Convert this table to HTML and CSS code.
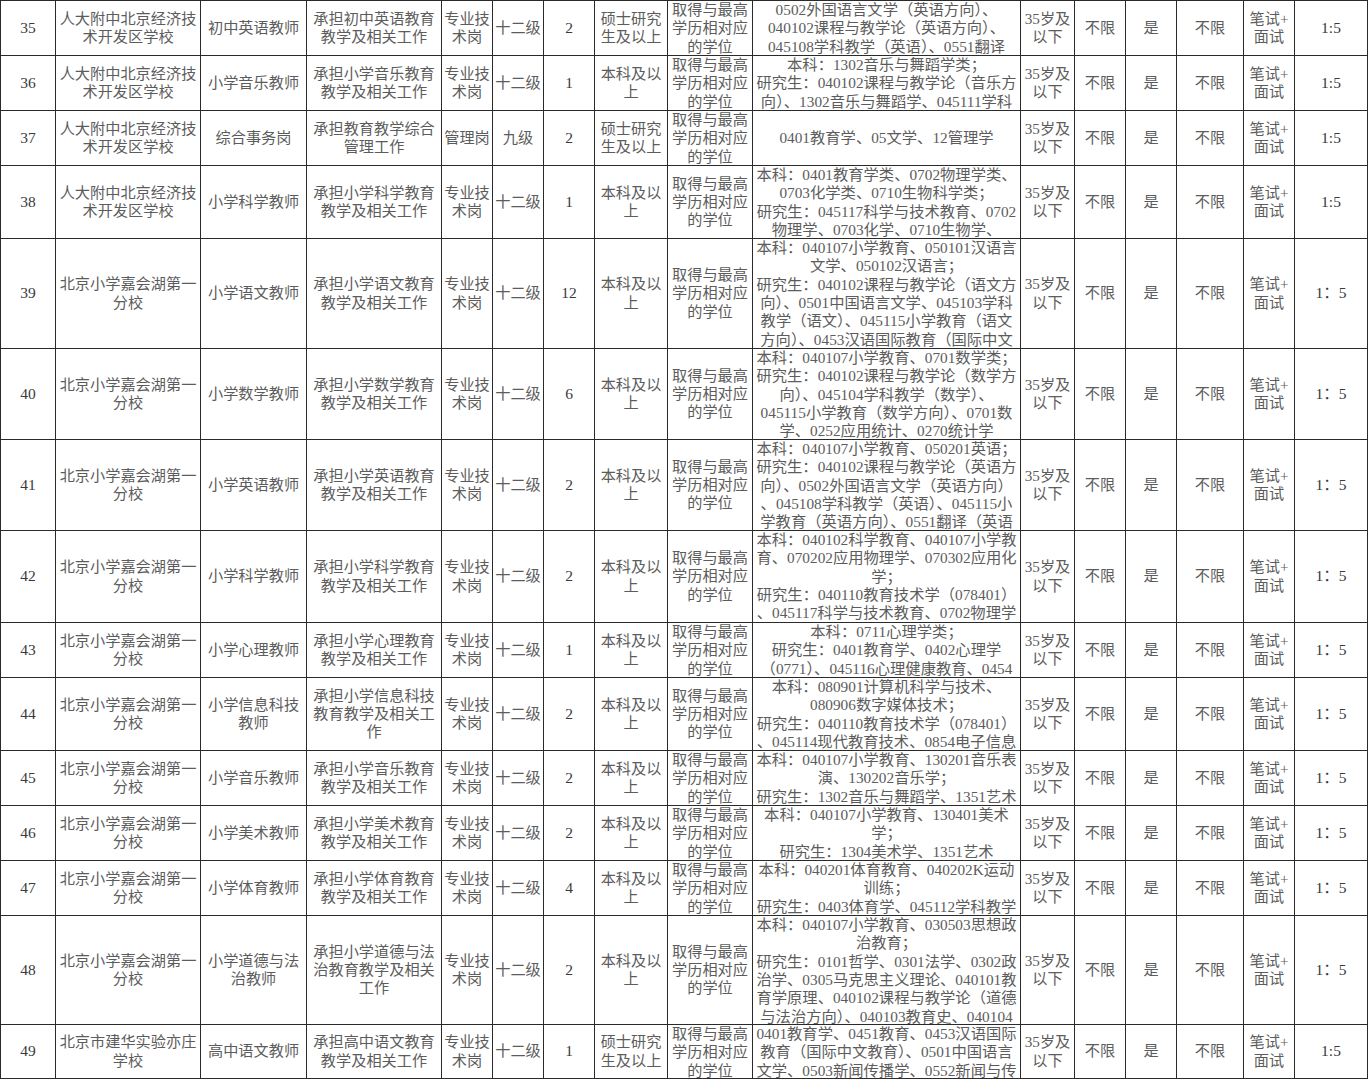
FILE: index.html
```html
<!DOCTYPE html>
<html lang="zh-CN">
<head>
<meta charset="utf-8">
<title>招聘岗位表</title>
<link rel="stylesheet" href="styles.css">
</head>
<body>
<div class="sheet">

  <div class="row h55">
    <div class="c num">35</div>
    <div class="c">人大附中北京经济技<br>术开发区学校</div>
    <div class="c">初中英语教师</div>
    <div class="c">承担初中英语教育<br>教学及相关工作</div>
    <div class="c">专业技<br>术岗</div>
    <div class="c">十二级</div>
    <div class="c num">2</div>
    <div class="c">硕士研究<br>生及以上</div>
    <div class="c">取得与最高<br>学历相对应<br>的学位</div>
    <div class="c major">0502外国语言文学（英语方向）、<br>040102课程与教学论（英语方向）、<br>045108学科教学（英语）、0551翻译</div>
    <div class="c">35岁及<br>以下</div>
    <div class="c">不限</div>
    <div class="c">是</div>
    <div class="c">不限</div>
    <div class="c">笔试+<br>面试</div>
    <div class="c num last">1:5</div>
  </div>

  <div class="row h55">
    <div class="c num">36</div>
    <div class="c">人大附中北京经济技<br>术开发区学校</div>
    <div class="c">小学音乐教师</div>
    <div class="c">承担小学音乐教育<br>教学及相关工作</div>
    <div class="c">专业技<br>术岗</div>
    <div class="c">十二级</div>
    <div class="c num">1</div>
    <div class="c">本科及以<br>上</div>
    <div class="c">取得与最高<br>学历相对应<br>的学位</div>
    <div class="c major">本科：1302音乐与舞蹈学类；<br>研究生：040102课程与教学论（音乐方<br>向）、1302音乐与舞蹈学、045111学科</div>
    <div class="c">35岁及<br>以下</div>
    <div class="c">不限</div>
    <div class="c">是</div>
    <div class="c">不限</div>
    <div class="c">笔试+<br>面试</div>
    <div class="c num last">1:5</div>
  </div>

  <div class="row h55">
    <div class="c num">37</div>
    <div class="c">人大附中北京经济技<br>术开发区学校</div>
    <div class="c">综合事务岗</div>
    <div class="c">承担教育教学综合<br>管理工作</div>
    <div class="c">管理岗</div>
    <div class="c">九级</div>
    <div class="c num">2</div>
    <div class="c">硕士研究<br>生及以上</div>
    <div class="c">取得与最高<br>学历相对应<br>的学位</div>
    <div class="c major">0401教育学、05文学、12管理学</div>
    <div class="c">35岁及<br>以下</div>
    <div class="c">不限</div>
    <div class="c">是</div>
    <div class="c">不限</div>
    <div class="c">笔试+<br>面试</div>
    <div class="c num last">1:5</div>
  </div>

  <div class="row h73">
    <div class="c num">38</div>
    <div class="c">人大附中北京经济技<br>术开发区学校</div>
    <div class="c">小学科学教师</div>
    <div class="c">承担小学科学教育<br>教学及相关工作</div>
    <div class="c">专业技<br>术岗</div>
    <div class="c">十二级</div>
    <div class="c num">1</div>
    <div class="c">本科及以<br>上</div>
    <div class="c">取得与最高<br>学历相对应<br>的学位</div>
    <div class="c major">本科：0401教育学类、0702物理学类、<br>0703化学类、0710生物科学类；<br>研究生：045117科学与技术教育、0702<br>物理学、0703化学、0710生物学、</div>
    <div class="c">35岁及<br>以下</div>
    <div class="c">不限</div>
    <div class="c">是</div>
    <div class="c">不限</div>
    <div class="c">笔试+<br>面试</div>
    <div class="c num last">1:5</div>
  </div>

  <div class="row h110">
    <div class="c num">39</div>
    <div class="c">北京小学嘉会湖第一<br>分校</div>
    <div class="c">小学语文教师</div>
    <div class="c">承担小学语文教育<br>教学及相关工作</div>
    <div class="c">专业技<br>术岗</div>
    <div class="c">十二级</div>
    <div class="c num">12</div>
    <div class="c">本科及以<br>上</div>
    <div class="c">取得与最高<br>学历相对应<br>的学位</div>
    <div class="c major">本科：040107小学教育、050101汉语言<br>文学、050102汉语言；<br>研究生：040102课程与教学论（语文方<br>向）、0501中国语言文学、045103学科<br>教学（语文）、045115小学教育（语文<br>方向）、0453汉语国际教育（国际中文</div>
    <div class="c">35岁及<br>以下</div>
    <div class="c">不限</div>
    <div class="c">是</div>
    <div class="c">不限</div>
    <div class="c">笔试+<br>面试</div>
    <div class="c num last">1：5</div>
  </div>

  <div class="row h91">
    <div class="c num">40</div>
    <div class="c">北京小学嘉会湖第一<br>分校</div>
    <div class="c">小学数学教师</div>
    <div class="c">承担小学数学教育<br>教学及相关工作</div>
    <div class="c">专业技<br>术岗</div>
    <div class="c">十二级</div>
    <div class="c num">6</div>
    <div class="c">本科及以<br>上</div>
    <div class="c">取得与最高<br>学历相对应<br>的学位</div>
    <div class="c major">本科：040107小学教育、0701数学类；<br>研究生：040102课程与教学论（数学方<br>向）、045104学科教学（数学）、<br>045115小学教育（数学方向）、0701数<br>学、0252应用统计、0270统计学</div>
    <div class="c">35岁及<br>以下</div>
    <div class="c">不限</div>
    <div class="c">是</div>
    <div class="c">不限</div>
    <div class="c">笔试+<br>面试</div>
    <div class="c num last">1：5</div>
  </div>

  <div class="row h91">
    <div class="c num">41</div>
    <div class="c">北京小学嘉会湖第一<br>分校</div>
    <div class="c">小学英语教师</div>
    <div class="c">承担小学英语教育<br>教学及相关工作</div>
    <div class="c">专业技<br>术岗</div>
    <div class="c">十二级</div>
    <div class="c num">2</div>
    <div class="c">本科及以<br>上</div>
    <div class="c">取得与最高<br>学历相对应<br>的学位</div>
    <div class="c major">本科：040107小学教育、050201英语；<br>研究生：040102课程与教学论（英语方<br>向）、0502外国语言文学（英语方向）<br>、045108学科教学（英语）、045115小<br>学教育（英语方向）、0551翻译（英语</div>
    <div class="c">35岁及<br>以下</div>
    <div class="c">不限</div>
    <div class="c">是</div>
    <div class="c">不限</div>
    <div class="c">笔试+<br>面试</div>
    <div class="c num last">1：5</div>
  </div>

  <div class="row h92">
    <div class="c num">42</div>
    <div class="c">北京小学嘉会湖第一<br>分校</div>
    <div class="c">小学科学教师</div>
    <div class="c">承担小学科学教育<br>教学及相关工作</div>
    <div class="c">专业技<br>术岗</div>
    <div class="c">十二级</div>
    <div class="c num">2</div>
    <div class="c">本科及以<br>上</div>
    <div class="c">取得与最高<br>学历相对应<br>的学位</div>
    <div class="c major">本科：040102科学教育、040107小学教<br>育、070202应用物理学、070302应用化<br>学；<br>研究生：040110教育技术学（078401）<br>、045117科学与技术教育、0702物理学</div>
    <div class="c">35岁及<br>以下</div>
    <div class="c">不限</div>
    <div class="c">是</div>
    <div class="c">不限</div>
    <div class="c">笔试+<br>面试</div>
    <div class="c num last">1：5</div>
  </div>

  <div class="row h55">
    <div class="c num">43</div>
    <div class="c">北京小学嘉会湖第一<br>分校</div>
    <div class="c">小学心理教师</div>
    <div class="c">承担小学心理教育<br>教学及相关工作</div>
    <div class="c">专业技<br>术岗</div>
    <div class="c">十二级</div>
    <div class="c num">1</div>
    <div class="c">本科及以<br>上</div>
    <div class="c">取得与最高<br>学历相对应<br>的学位</div>
    <div class="c major">本科：0711心理学类；<br>研究生：0401教育学、0402心理学<br>（0771）、045116心理健康教育、0454</div>
    <div class="c">35岁及<br>以下</div>
    <div class="c">不限</div>
    <div class="c">是</div>
    <div class="c">不限</div>
    <div class="c">笔试+<br>面试</div>
    <div class="c num last">1：5</div>
  </div>

  <div class="row h73">
    <div class="c num">44</div>
    <div class="c">北京小学嘉会湖第一<br>分校</div>
    <div class="c">小学信息科技<br>教师</div>
    <div class="c">承担小学信息科技<br>教育教学及相关工<br>作</div>
    <div class="c">专业技<br>术岗</div>
    <div class="c">十二级</div>
    <div class="c num">2</div>
    <div class="c">本科及以<br>上</div>
    <div class="c">取得与最高<br>学历相对应<br>的学位</div>
    <div class="c major">本科：080901计算机科学与技术、<br>080906数字媒体技术；<br>研究生：040110教育技术学（078401）<br>、045114现代教育技术、0854电子信息</div>
    <div class="c">35岁及<br>以下</div>
    <div class="c">不限</div>
    <div class="c">是</div>
    <div class="c">不限</div>
    <div class="c">笔试+<br>面试</div>
    <div class="c num last">1：5</div>
  </div>

  <div class="row h55">
    <div class="c num">45</div>
    <div class="c">北京小学嘉会湖第一<br>分校</div>
    <div class="c">小学音乐教师</div>
    <div class="c">承担小学音乐教育<br>教学及相关工作</div>
    <div class="c">专业技<br>术岗</div>
    <div class="c">十二级</div>
    <div class="c num">2</div>
    <div class="c">本科及以<br>上</div>
    <div class="c">取得与最高<br>学历相对应<br>的学位</div>
    <div class="c major">本科：040107小学教育、130201音乐表<br>演、130202音乐学；<br>研究生：1302音乐与舞蹈学、1351艺术</div>
    <div class="c">35岁及<br>以下</div>
    <div class="c">不限</div>
    <div class="c">是</div>
    <div class="c">不限</div>
    <div class="c">笔试+<br>面试</div>
    <div class="c num last">1：5</div>
  </div>

  <div class="row h55">
    <div class="c num">46</div>
    <div class="c">北京小学嘉会湖第一<br>分校</div>
    <div class="c">小学美术教师</div>
    <div class="c">承担小学美术教育<br>教学及相关工作</div>
    <div class="c">专业技<br>术岗</div>
    <div class="c">十二级</div>
    <div class="c num">2</div>
    <div class="c">本科及以<br>上</div>
    <div class="c">取得与最高<br>学历相对应<br>的学位</div>
    <div class="c major">本科：040107小学教育、130401美术<br>学；<br>研究生：1304美术学、1351艺术</div>
    <div class="c">35岁及<br>以下</div>
    <div class="c">不限</div>
    <div class="c">是</div>
    <div class="c">不限</div>
    <div class="c">笔试+<br>面试</div>
    <div class="c num last">1：5</div>
  </div>

  <div class="row h55">
    <div class="c num">47</div>
    <div class="c">北京小学嘉会湖第一<br>分校</div>
    <div class="c">小学体育教师</div>
    <div class="c">承担小学体育教育<br>教学及相关工作</div>
    <div class="c">专业技<br>术岗</div>
    <div class="c">十二级</div>
    <div class="c num">4</div>
    <div class="c">本科及以<br>上</div>
    <div class="c">取得与最高<br>学历相对应<br>的学位</div>
    <div class="c major">本科：040201体育教育、040202K运动<br>训练；<br>研究生：0403体育学、045112学科教学</div>
    <div class="c">35岁及<br>以下</div>
    <div class="c">不限</div>
    <div class="c">是</div>
    <div class="c">不限</div>
    <div class="c">笔试+<br>面试</div>
    <div class="c num last">1：5</div>
  </div>

  <div class="row h109">
    <div class="c num">48</div>
    <div class="c">北京小学嘉会湖第一<br>分校</div>
    <div class="c">小学道德与法<br>治教师</div>
    <div class="c">承担小学道德与法<br>治教育教学及相关<br>工作</div>
    <div class="c">专业技<br>术岗</div>
    <div class="c">十二级</div>
    <div class="c num">2</div>
    <div class="c">本科及以<br>上</div>
    <div class="c">取得与最高<br>学历相对应<br>的学位</div>
    <div class="c major">本科：040107小学教育、030503思想政<br>治教育；<br>研究生：0101哲学、0301法学、0302政<br>治学、0305马克思主义理论、040101教<br>育学原理、040102课程与教学论（道德<br>与法治方向）、040103教育史、040104</div>
    <div class="c">35岁及<br>以下</div>
    <div class="c">不限</div>
    <div class="c">是</div>
    <div class="c">不限</div>
    <div class="c">笔试+<br>面试</div>
    <div class="c num last">1：5</div>
  </div>

  <div class="row h55 end">
    <div class="c num">49</div>
    <div class="c">北京市建华实验亦庄<br>学校</div>
    <div class="c">高中语文教师</div>
    <div class="c">承担高中语文教育<br>教学及相关工作</div>
    <div class="c">专业技<br>术岗</div>
    <div class="c">十二级</div>
    <div class="c num">1</div>
    <div class="c">硕士研究<br>生及以上</div>
    <div class="c">取得与最高<br>学历相对应<br>的学位</div>
    <div class="c major">0401教育学、0451教育、0453汉语国际<br>教育（国际中文教育）、0501中国语言<br>文学、0503新闻传播学、0552新闻与传</div>
    <div class="c">35岁及<br>以下</div>
    <div class="c">不限</div>
    <div class="c">是</div>
    <div class="c">不限</div>
    <div class="c">笔试+<br>面试</div>
    <div class="c num last">1:5</div>
  </div>

</div>
</body>
</html>
```

FILE: styles.css
```css
html, body {
  margin: 0;
  padding: 0;
  background: #ffffff;
}

.sheet {
  width: 1368px;
  height: 1080px;
  overflow: hidden;
  font-family: "Liberation Serif", "Noto Sans CJK SC", serif;
  font-size: 15.2px;
  line-height: 18.33px;
  color: #5c5c5c;
}

.row {
  display: grid;
  grid-template-columns: 55px 145px 106px 135px 51px 51px 51px 73px 85px 268px 54px 51px 51px 67px 51px 74px;
  box-sizing: border-box;
  border-top: 1px solid #2a2a2a;
}

.row.end {
  border-bottom: 1px solid #2a2a2a;
}

.h55 { height: 55px; }
.h73 { height: 73px; }
.h91 { height: 91px; }
.h92 { height: 92px; }
.h109 { height: 109px; }
.h110 { height: 110px; }

.c {
  box-sizing: border-box;
  border-left: 1px solid #2a2a2a;
  display: flex;
  align-items: safe center;
  justify-content: center;
  text-align: center;
  overflow: hidden;
  min-width: 0;
}

.c.last {
  border-right: 1px solid #2a2a2a;
}

.num {
  color: #3a3a3a;
  font-size: 15.5px;
}

.major {
  white-space: nowrap;
  font-size: 15.3px;
}
```
